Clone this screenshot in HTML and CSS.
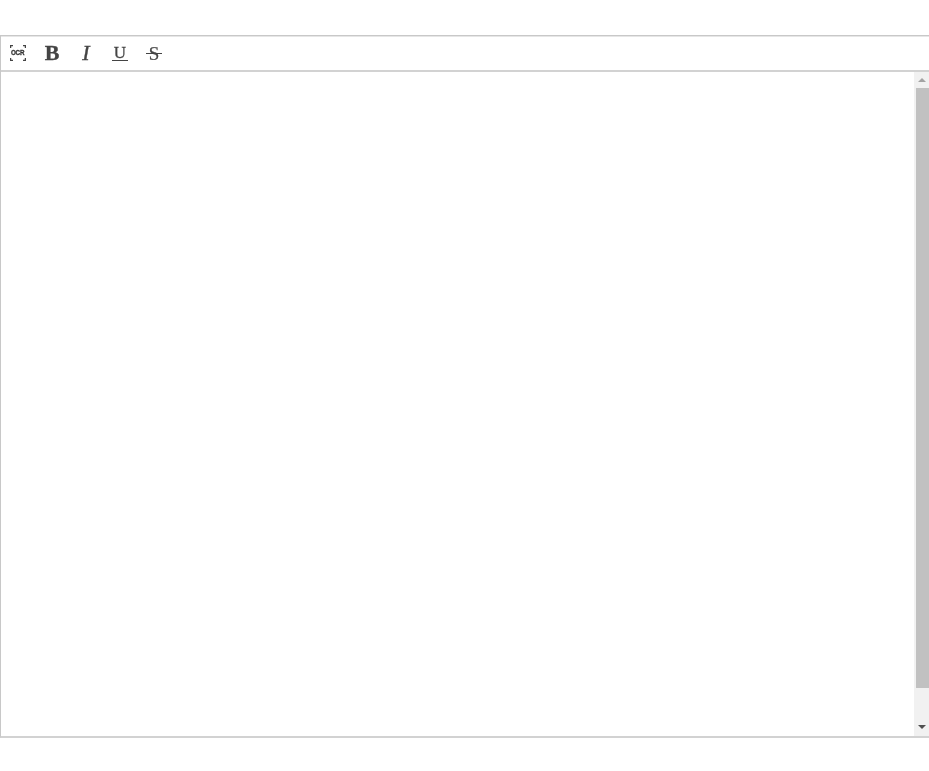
FILE: index.html
```html
<!DOCTYPE html>
<html lang="en">
<head>
<meta charset="utf-8">
<title>Editor</title>
<link rel="stylesheet" href="styles.css">
</head>
<body>
<div class="editor">
  <div class="toolbar">
    <button class="tool tool-ocr" type="button" aria-label="OCR">
      <span class="ocr-frame"><svg width="16" height="16" viewBox="0 0 16 16" fill="none" stroke="#444" stroke-width="1.3"><path d="M.6 3V.6H3M13 .6h2.4V3M15.4 13v2.4H13M3 15.4H.6V13"/></svg><span class="ocr-text">OCR</span></span>
    </button>
    <button class="tool tool-b" type="button">B</button>
    <button class="tool tool-i" type="button">I</button>
    <button class="tool tool-u" type="button"><span class="glyph">U</span></button>
    <button class="tool tool-s" type="button"><span class="glyph">S</span></button>
  </div>
  <div class="body">
    <div class="content"></div>
    <div class="scrollbar">
      <div class="arrow arrow-up"></div>
      <div class="track"><div class="thumb"></div></div>
      <div class="arrow arrow-down"></div>
    </div>
  </div>
</div>
</body>
</html>
```
FILE: styles.css
```css
html, body {
  margin: 0;
  padding: 0;
  background: #fff;
  overflow: hidden;
}
body {
  padding-top: 35px;
  height: 736px;
  box-sizing: content-box;
}
.editor {
  display: flex;
  flex-direction: column;
  height: 700px;
  border: 1px solid #c8c8c8;
  border-right: 0;
  border-bottom: 2px solid #d2d2d2;
}
.toolbar {
  display: flex;
  align-items: center;
  height: 34px;
  border-bottom: 2px solid #d2d2d2;
  box-shadow: inset 0 1px 0 #e6e6e6;
  box-sizing: content-box;
}
.tool {
  position: relative;
  display: flex;
  align-items: center;
  justify-content: center;
  width: 34px;
  height: 34px;
  margin: 0;
  padding: 0;
  border: 0;
  background: none;
  color: #444;
  font-family: "Liberation Serif", serif;
  font-size: 22px;
  line-height: 1;
  will-change: transform;
}
.ocr-frame {
  position: relative;
  display: flex;
  width: 16px;
  height: 16px;
  align-items: center;
  justify-content: center;
}
.ocr-frame svg {
  position: absolute;
  inset: 0;
}
.ocr-text {
  font-family: "Liberation Sans", sans-serif;
  font-size: 8px;
  font-weight: 700;
  letter-spacing: -0.2px;
  color: #333;
  -webkit-text-stroke: 0.35px #333;
  transform: scaleX(0.78);
}
.tool-b {
  font-weight: 700;
  -webkit-text-stroke: 0.3px #444;
}
.tool-i {
  font-style: italic;
  -webkit-text-stroke: 0.4px #444;
}
.tool-u {
  font-size: 17px;
  -webkit-text-stroke: 0.3px #444;
}
.tool-s {
  font-size: 19px;
  -webkit-text-stroke: 0.2px #444;
}
.tool-u::after,
.tool-s::after {
  content: "";
  position: absolute;
  left: 9px;
  width: 16px;
  height: 1px;
  background: #444;
}
.tool-u::after {
  top: 24px;
}
.tool-s::after {
  top: 17px;
}
.tool-u .glyph {
  margin-top: -1px;
}
.body {
  display: flex;
  flex: 1;
  min-height: 0;
}
.content {
  flex: 1;
}
.scrollbar {
  display: flex;
  flex-direction: column;
  width: 15px;
  background: #f1f1f1;
}
.arrow {
  display: flex;
  flex: none;
  height: 16px;
  align-items: center;
  justify-content: center;
}
.arrow::before {
  content: "";
  width: 0;
  height: 0;
  border-left: 4px solid transparent;
  border-right: 4px solid transparent;
}
.arrow-up::before {
  border-bottom: 4px solid #a3a3a3;
}
.arrow-down {
  padding-bottom: 1px;
}
.arrow-down::before {
  border-top: 4px solid #505050;
}
.track {
  flex: 1;
  padding-left: 2px;
}
.thumb {
  height: 600px;
  background: #c1c1c1;
}
```
